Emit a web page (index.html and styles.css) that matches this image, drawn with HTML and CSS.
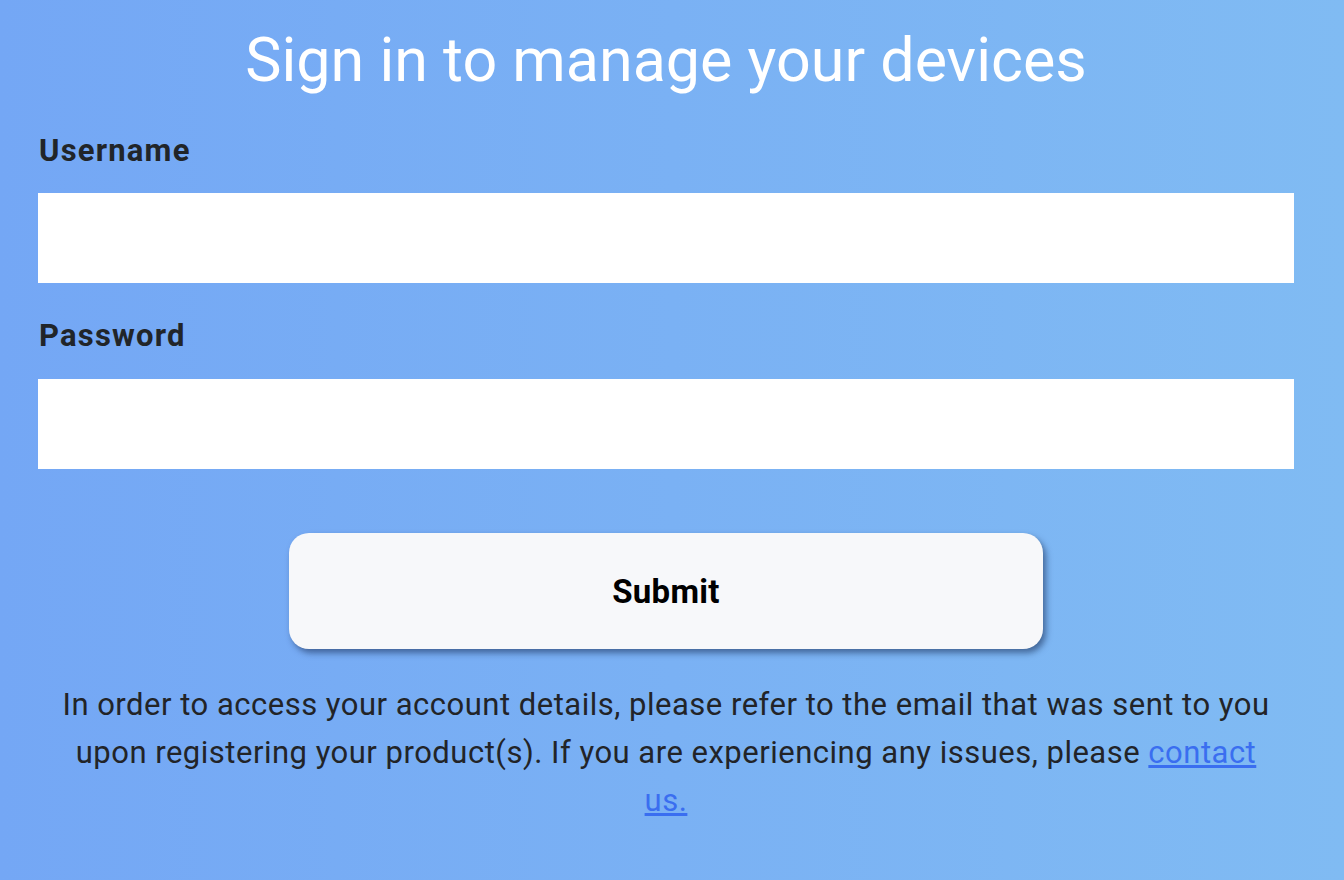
FILE: index.html
```html
<!DOCTYPE html>
<html lang="en">
<head>
<meta charset="utf-8">
<title>Sign in</title>
<link rel="stylesheet" href="styles.css">
</head>
<body>
<main class="page">
  <h1 class="title">Sign in to manage your devices</h1>
  <form class="form" onsubmit="return false">
    <label class="label" for="username">Username</label>
    <input class="field" id="username" type="text">
    <label class="label label-2" for="password">Password</label>
    <input class="field" id="password" type="password">
    <div class="actions">
      <button class="submit" type="submit">Submit</button>
    </div>
  </form>
  <p class="note">In order to access your account details, please refer to the email that was sent to you upon registering your product(s). If you are experiencing any issues, please <a href="#" class="link">contact us.</a></p>
</main>
</body>
</html>
```
FILE: styles.css
```css
html, body {
  margin: 0;
  padding: 0;
  height: 100%;
}
body {
  background: linear-gradient(90deg, #74a7f5 0%, #80bbf3 100%);
  font-family: Roboto, "Liberation Sans", sans-serif;
  color: #212529;
}
.page {
  padding: 0 50px 0 38px;
  box-sizing: border-box;
}
.title {
  margin: 0;
  padding-top: 20px;
  text-align: center;
  font-weight: 400;
  font-size: 61px;
  line-height: 80px;
  color: #ffffff;
}
.form {
  display: flex;
  flex-direction: column;
}
.label {
  font-weight: 700;
  font-size: 31px;
  letter-spacing: 1.2px;
  line-height: 40px;
  margin-top: 31px;
  margin-bottom: 22px;
  padding-left: 1px;
}
.label-2 {
  margin-top: 33px;
  margin-bottom: 23px;
}
.field {
  height: 90px;
  border: 0;
  margin: 0;
  padding: 0 16px;
  background: #ffffff;
  font-size: 28px;
  box-sizing: border-box;
  outline: none;
}
.actions {
  display: flex;
  justify-content: center;
  margin-top: 64px;
}
.submit {
  width: 754px;
  height: 116px;
  border: 0;
  border-radius: 20px;
  background: #f7f8fa;
  box-shadow: 3px 4px 6px rgba(20, 40, 80, 0.55);
  font-family: Roboto, "Liberation Sans", sans-serif;
  font-weight: 700;
  font-size: 33px;
  letter-spacing: 0.3px;
  color: #000000;
}
.note {
  margin: 32px 0 0;
  padding: 0 18px;
  text-align: center;
  font-size: 31px;
  letter-spacing: 0.5px;
  line-height: 48px;
  color: #222428;
}
.link {
  color: #3a6ef0;
  text-decoration: underline;
}
```
